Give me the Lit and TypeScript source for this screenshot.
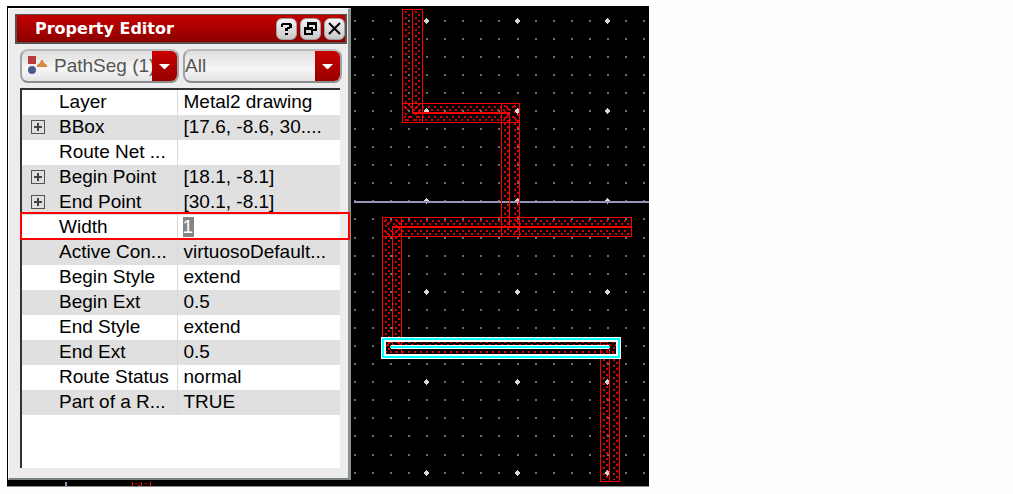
import { LitElement, html, svg, css } from "lit";
import { customElement } from "lit/decorators.js";
import { classMap } from "lit/directives/class-map.js";

interface Prop {
  name: string;
  value: string;
  shaded?: boolean;
  group?: boolean;
  editing?: boolean;
}

const PROPS: Prop[] = [
  { name: "Layer", value: "Metal2 drawing" },
  { name: "BBox", value: "[17.6, -8.6, 30....", shaded: true, group: true },
  { name: "Route Net ...", value: "" },
  { name: "Begin Point", value: "[18.1, -8.1]", shaded: true, group: true },
  { name: "End Point", value: "[30.1, -8.1]", shaded: true, group: true },
  { name: "Width", value: "1", editing: true },
  { name: "Active Con...", value: "virtuosoDefault...", shaded: true },
  { name: "Begin Style", value: "extend" },
  { name: "Begin Ext", value: "0.5", shaded: true },
  { name: "End Style", value: "extend" },
  { name: "End Ext", value: "0.5", shaded: true },
  { name: "Route Status", value: "normal" },
  { name: "Part of a R...", value: "TRUE", shaded: true },
];

@customElement("property-editor")
class PropertyEditor extends LitElement {
  static styles = css`
    :host {
      display: flex;
      flex-direction: column;
      box-sizing: border-box;
      padding: 5px 1px 10px 6px;
      background: #ececee;
      border: 1px solid #fff;
      border-right: 3px solid #8b918b;
      border-bottom: 2px solid #7d8484;
      font: 19px/24px "Liberation Sans", Arial, sans-serif;
      color: #000;
    }
    .title {
      display: flex;
      align-items: center;
      gap: 3px;
      height: 30px;
      box-sizing: border-box;
      padding: 0 0 0 18px;
      border: 2px solid #5a5050;
      border-top-width: 1px;
      background: linear-gradient(#c40000, #8c0000);
      color: #fff;
    }
    h1 {
      flex: 1;
      margin: 0;
      font: bold 16px/27px "DejaVu Sans", sans-serif;
      white-space: nowrap;
    }
    button {
      padding: 0;
      font: inherit;
    }
    .tool {
      display: grid;
      width: 21px;
      height: 22px;
      border: 1px solid #a0a0a0;
      border-radius: 6px;
      background: linear-gradient(#f4f4f4, #c8c8c8);
      place-items: center;
    }
    .filters {
      display: grid;
      grid-template-columns: 1fr 1fr;
      gap: 4px;
      margin: 5px;
    }
    .combo {
      display: flex;
      align-items: stretch;
      height: 34px;
      box-sizing: border-box;
      border: 2px solid #a2a2a2;
      border-top-color: #bababa;
      border-bottom-color: #8c8c8c;
      border-radius: 8px;
      background: linear-gradient(#dedee0, #f6f6f6 60%, #e4e4e4);
      overflow: hidden;
    }
    .combo svg {
      flex: none;
    }
    .kind {
      align-self: center;
      margin: 0 7px 3px 5px;
    }
    select {
      flex: 1;
      min-width: 0;
      padding: 0;
      border: 0;
      appearance: none;
      background: none;
      font: inherit;
      color: #555;
      overflow: hidden;
      text-overflow: clip;
    }
    .arrow {
      width: 25px;
      background: linear-gradient(#c80000, #980000);
    }
    .sheet {
      flex: 1;
      margin: 0 7px 0 5px;
      border-top: 2px solid #333;
      border-left: 2px solid #333;
      background: #fff;
    }
    table {
      width: 100%;
      border-collapse: collapse;
      table-layout: fixed;
    }
    .names {
      width: 155px;
    }
    tr {
      position: relative;
    }
    .shaded {
      background: #e0e0e0;
    }
    .editing td::after {
      content: "";
      position: absolute;
      inset: -3px -10px 0 -2px;
      border: 2px solid #f00;
      pointer-events: none;
    }
    th,
    td {
      height: 25px;
      padding: 0;
      font-weight: normal;
      text-align: left;
      vertical-align: top;
      white-space: nowrap;
    }
    th {
      border-right: 1px solid #d8d8d8;
    }
    td {
      padding-left: 6px;
    }
    .name {
      display: flex;
      align-items: center;
    }
    .toggle {
      display: flex;
      align-items: center;
      width: 37px;
      padding-left: 9px;
      box-sizing: border-box;
      flex: none;
    }
    .expand {
      display: grid;
      width: 14px;
      height: 14px;
      border: 1px solid #555;
      background: none;
      place-items: center;
    }
    input {
      display: block;
      width: 11px;
      height: 20px;
      margin: 2px 0 0 -1px;
      padding: 0;
      border: 0;
      border-radius: 0;
      background: #858585;
      color: #fff;
      font: inherit;
    }
  `;

  private combo(label: string, value: string, icon: unknown) {
    return html`<div class="combo">
      ${icon}
      <select aria-label=${label}>
        <option>${value}</option>
      </select>
      <svg class="arrow" viewBox="0 0 25 30" aria-hidden="true">
        <path d="M7 13h11l-5 5h-1z" fill="#fff" />
      </svg>
    </div>`;
  }

  private row(p: Prop) {
    return html`<tr class=${classMap({ shaded: !!p.shaded, editing: !!p.editing })}>
      <th scope="row">
        <div class="name">
          <span class="toggle">
            ${p.group
              ? html`<button class="expand" aria-label="Expand ${p.name}">
                  <svg width="10" height="10" aria-hidden="true">
                    <path d="M5 1v8M1 5h8" stroke="#444" stroke-width="2" />
                  </svg>
                </button>`
              : ""}
          </span>
          ${p.editing ? html`<label for="edit">${p.name}</label>` : html`<span>${p.name}</span>`}
        </div>
      </th>
      <td>${p.editing ? html`<input id="edit" .value=${p.value} />` : p.value}</td>
    </tr>`;
  }

  render() {
    return html`
      <header class="title">
        <h1>Property Editor</h1>
        <button class="tool" aria-label="Help">
          <svg width="17" height="18" aria-hidden="true" shape-rendering="crispEdges">
            <path
              d="M4 3h9v1h1v4h-2v1h-2v2H7V8h2V7h2V5H5v2H3V4h1zM7 13h3v2H7z"
              fill="#000"
            />
          </svg>
        </button>
        <button class="tool" aria-label="Undock">
          <svg width="17" height="18" aria-hidden="true" shape-rendering="crispEdges">
            <path
              d="M5 2h10v9h-4v4H2V7h3zM7 5v2h4v2h2V5zM4 10v3h5v-3z"
              fill="#000"
              fill-rule="evenodd"
            />
          </svg>
        </button>
        <button class="tool" aria-label="Close">
          <svg width="17" height="18" aria-hidden="true">
            <path d="M3 3l11 11M14 3L3 14" stroke="#000" stroke-width="2" />
          </svg>
        </button>
      </header>
      <div class="filters">
        ${this.combo(
          "Object",
          "PathSeg (1)",
          html`<svg class="kind" width="20" height="20" aria-hidden="true">
            <rect x="1" y="1" width="8" height="8" fill="#b83a3a" />
            <circle cx="5" cy="15" r="4" fill="#485c90" />
            <path d="M10 12v-2l3-2 1-3h2l1 3 3 2v2z" fill="#d88840" />
          </svg>`
        )}
        ${this.combo("Show", "All", "")}
      </div>
      <div class="sheet">
        <table>
          <colgroup>
            <col class="names" />
            <col />
          </colgroup>
          <tbody>
            ${PROPS.map((p) => this.row(p))}
          </tbody>
        </table>
      </div>
    `;
  }
}

/* Wire segments: outline box [x, y, w, h] */
const SEGMENTS = [
  [402, 9, 20, 113],
  [402, 103, 117, 19],
  [501, 103, 18, 133],
  [382, 217, 249, 19],
  [382, 217, 19, 140],
  [600, 339, 19, 142],
  [382, 338, 237, 19],
];

/* Rows of stipple dots across a wire, two on each side of the centre line */
const STIPPLE = [3, 6, 13, 16];

@customElement("layout-canvas")
class LayoutCanvas extends LitElement {
  static styles = css`
    :host {
      display: block;
      background: #000;
    }
    .view {
      display: block;
      width: 100%;
    }
  `;

  private stipple([x, y, w, h]: number[]) {
    return STIPPLE.map((offset, i) => {
      const d = w > h ? `M${x + 2} ${y + offset + 1}H${x + w - 1}` : `M${x + offset + 1} ${y + 2}V${y + h - 1}`;
      return svg`<path d=${d} stroke="#d80000" stroke-width="2"
        stroke-dasharray="2 4" stroke-dashoffset=${i % 2 ? 3 : 0} />`;
    });
  }

  private grid() {
    const marks = [];
    for (let r = 0; r < 26; r++) {
      for (let c = 0; c < 17; c++) {
        const x = Math.round(353.6 + c * 18.1);
        const y = Math.round(19.6 + r * 18.08);
        const major = c % 5 === 4 && r % 5 === 0;
        marks.push(
          major
            ? svg`<path d="M${x - 2} ${y}h5v2h-5zM${x - 1} ${y - 1}h3v4h-3zM${x} ${y - 2}h1v6h-1z" fill="#d8d8d8" />`
            : svg`<rect x=${x} y=${y} width="2" height="2" fill="#6c6c78" />`
        );
      }
    }
    return marks;
  }

  render() {
    return html`<svg
      class="view"
      viewBox="352 6 297 480"
      shape-rendering="crispEdges"
      role="img"
      aria-label="Metal2 route"
    >
      ${SEGMENTS.map((s) => this.stipple(s))}
      ${this.grid()}
      <path d="M354 202H649" stroke="#9494b4" stroke-width="2" />
      ${SEGMENTS.map(
        ([x, y, w, h]) =>
          svg`<rect x=${x + 0.5} y=${y + 0.5} width=${w} height=${h} fill="none" stroke="#f00" />`
      )}
      <path
        d="M412.5 9V113M509.5 113V227M392.5 227V347M609.5 347V482"
        fill="none"
        stroke="#f00"
      />
      <path d="M412 113H510M392 227H632" stroke="#f00" stroke-width="2" />
      <rect x="383.5" y="339.5" width="235" height="17" fill="none" stroke="#fff" stroke-width="5" />
      <rect x="383" y="339" width="236" height="18" fill="none" stroke="#0ff" stroke-width="2" />
      <path d="M391 345h218v4h-218z" fill="#fff" />
      <path d="M390 346h220v2h-220z" fill="#0ff" />
    </svg>`;
  }
}

@customElement("app-root")
class AppRoot extends LitElement {
  static styles = css`
    :host {
      display: block;
      min-height: 100vh;
      box-sizing: border-box;
      padding: 6px 7px;
      background: #fefefe;
    }
    .screen {
      display: grid;
      grid-template-columns: 344px minmax(0, 1fr);
      max-width: 642px;
      background: #000;
      border-bottom: 1px solid #888;
    }
    .dock {
      display: flex;
      flex-direction: column;
      padding: 2px 0 0 1px;
    }
    property-editor {
      flex: 1;
    }
    .edge {
      display: block;
      flex: none;
      width: 100%;
      height: 6px;
    }
    layout-canvas {
      margin-left: 1px;
    }
  `;

  render() {
    return html`<main class="screen">
      <div class="dock">
        <property-editor></property-editor>
        <svg class="edge" aria-hidden="true">
          <path d="M57 2h2v4h-2z" fill="#9494b4" />
          <path d="M124 2h1v4h-1zM133 2h1v4h-1zM142 2h1v4h-1zM127 3h2v1h-2zM130 5h2v1h-2zM137 3h2v1h-2z" fill="#f00" />
        </svg>
      </div>
      <layout-canvas></layout-canvas>
    </main>`;
  }
}
